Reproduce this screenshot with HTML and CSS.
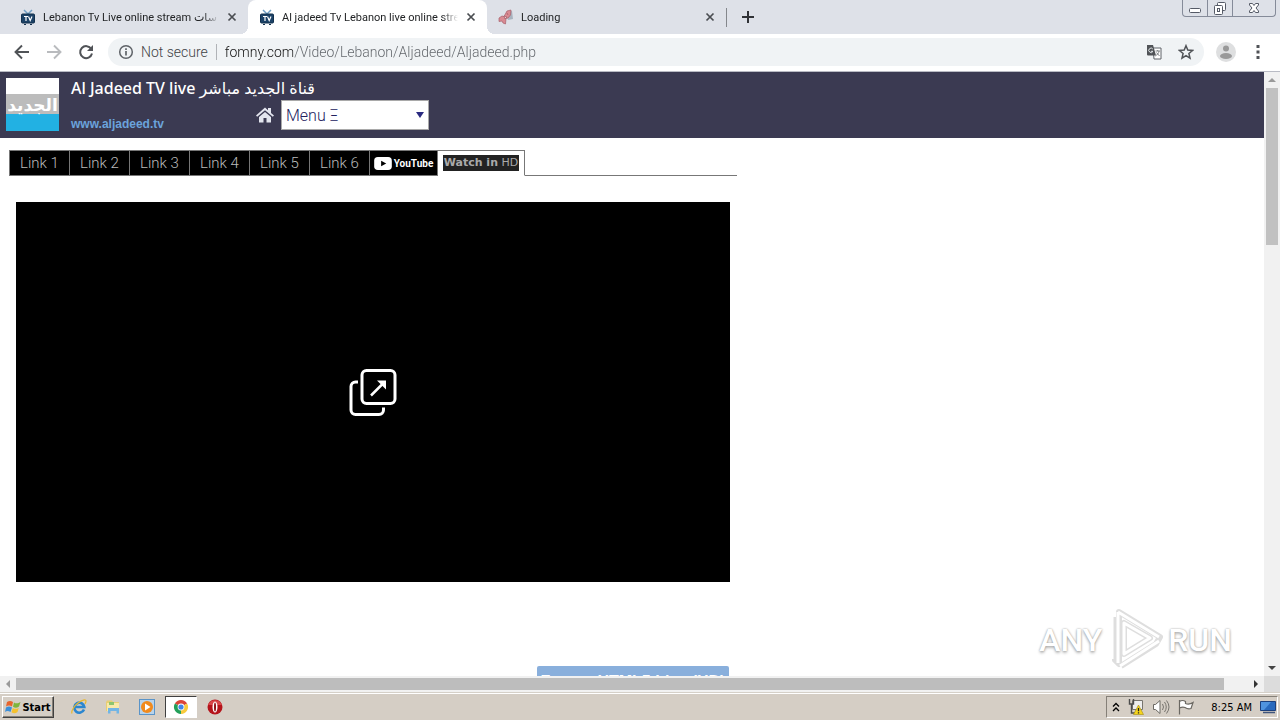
FILE: index.html
```html
<!DOCTYPE html>
<html lang="en">
<head>
<meta charset="utf-8">
<title>Al jadeed Tv Lebanon live online stream</title>
<link rel="stylesheet" href="styles.css">
</head>
<body>
<svg class="defs" width="0" height="0">
  <symbol id="tv" viewBox="0 0 16 16">
    <path d="M4 1l4 4 4-4" fill="none" stroke="#6f9fc4" stroke-width="1.5"/>
    <rect x="1.5" y="5" width="13" height="9" rx="1" fill="#1c4267" stroke="#12304d"/>
    <path d="M4 7.5h4M6 7.5v4.500M8.500 7.500l1.700 4 1.800-4" fill="none" stroke="#fff" stroke-width="1.200"/>
    <path d="M4 15.500h2M10 15.500h2" stroke="#12304d"/>
  </symbol>
  <symbol id="close" viewBox="0 0 10 10">
    <path d="M1.500 1.500l7 7M8.500 1.500l-7 7" stroke="#4a4d51" stroke-width="1.700"/>
  </symbol>
</svg>

<div class="tab-strip">
  <div class="tab">
    <svg class="favicon"><use href="#tv"/></svg>
    <span class="tab-title">Lebanon Tv Live online stream سات</span>
    <button class="tab-close" aria-label="Close tab"><svg><use href="#close"/></svg></button>
  </div>
  <div class="tab active">
    <svg class="favicon"><use href="#tv"/></svg>
    <span class="tab-title">Al jadeed Tv Lebanon live online stream</span>
    <button class="tab-close" aria-label="Close tab"><svg><use href="#close"/></svg></button>
  </div>
  <div class="tab last">
    <svg class="favicon" viewBox="0 0 16 16">
      <path d="M8 3l6-1 1 8-5 1z" fill="#a9b3bf"/>
      <path d="M1 9l3-2 2 .5L9 2l4-1-.5 5-2.500 3L8 9.500 7.500 15 5 14l-1-2-3 .5z" fill="#d98a92" stroke="#a8606b" stroke-width=".7"/>
      <path d="M6 7l3 1-2 2zM9 4l1 2" fill="#f3c9cc" stroke="#8a4450" stroke-width=".5"/>
    </svg>
    <span class="tab-title">Loading</span>
    <button class="tab-close" aria-label="Close tab"><svg><use href="#close"/></svg></button>
  </div>
  <button class="new-tab" aria-label="New tab"><svg viewBox="0 0 12 12"><path d="M6 0v12M0 6h12" stroke="#303236" stroke-width="2"/></svg></button>
  <div class="window-buttons">
    <button aria-label="Minimize"><svg viewBox="0 0 24 16"><rect x="6.500" y="8.500" width="11" height="4" rx="1" fill="#fff" stroke="#555a66"/></svg></button>
    <button aria-label="Restore"><svg viewBox="0 0 24 16"><rect x="9.500" y="2.500" width="8" height="8" rx="1" fill="#fff" stroke="#555a66"/><rect x="6.500" y="5.500" width="8" height="9" rx="1" fill="#fff" stroke="#555a66"/><rect x="9.500" y="8.500" width="2" height="3" fill="none" stroke="#555a66"/></svg></button>
    <button class="wide" aria-label="Close"><svg viewBox="0 0 24 16"><path d="M7.500 3.500h3l1.500 2 1.500-2h3v1.500l-2.500 3 2.500 3v1.500h-3l-1.500-2-1.500 2h-3v-1.500l2.500-3-2.500-3z" fill="#fff" stroke="#555a66"/></svg></button>
  </div>
</div>

<div class="toolbar">
  <button class="nav" aria-label="Back"><svg viewBox="0 0 16 16"><path d="M15 8H2M8 1.500L1.500 8 8 14.500" fill="none" stroke="#505357" stroke-width="1.900"/></svg></button>
  <button class="nav" aria-label="Forward"><svg viewBox="0 0 16 16"><path d="M1 8h13M8 1.500L14.500 8 8 14.500" fill="none" stroke="#b9bbbe" stroke-width="1.900"/></svg></button>
  <button class="nav" aria-label="Reload"><svg viewBox="0 0 16 16"><path d="M13.300 5A6 6 0 1 0 14 9.500" fill="none" stroke="#505357" stroke-width="2"/><path d="M15 1v6H9z" fill="#505357"/></svg></button>
  <div class="omnibox">
    <svg class="info" viewBox="0 0 16 16"><circle cx="8" cy="8" r="6.300" fill="none" stroke="#5f6368" stroke-width="1.500"/><path d="M8 7v4.500M8 4.300v1.600" stroke="#5f6368" stroke-width="1.700"/></svg>
    <label class="secure" for="url">Not secure</label>
    <input class="url" id="url" type="text" value="fomny.com/Video/Lebanon/Aljadeed/Aljadeed.php">
    <button aria-label="Translate"><svg viewBox="0 0 16 16"><path d="M7 4h8v11H8z" fill="#fff" stroke="#5f6368"/><path d="M1 1h6l3 10.500H2a1 1 0 0 1-1-1z" fill="#505357"/><path d="M6.800 5A2.200 2.200 0 1 0 7 7.300H5" fill="none" stroke="#e4e8eb"/><path d="M9.500 7h4.500M11.700 6v1M13 7c0 2-2 4-3.500 5M10.500 8.500l3 3.500" fill="none" stroke="#777a7e" stroke-width=".9"/></svg></button>
    <button aria-label="Bookmark"><svg viewBox="0 0 16 16"><path d="M8 1.700l1.800 4.400 4.700.4-3.600 3 1.100 4.700L8 11.700l-4 2.500 1.100-4.700-3.600-3 4.700-.4z" fill="none" stroke="#505357" stroke-width="1.500"/></svg></button>
  </div>
  <button class="avatar" aria-label="Profile"><svg viewBox="0 0 20 20"><circle cx="10" cy="10" r="10" fill="#dedfe0"/><circle cx="10" cy="6.500" r="3" fill="#999"/><ellipse cx="10" cy="14" rx="6" ry="3" fill="#999"/></svg></button>
  <button class="more" aria-label="Menu"><svg viewBox="0 0 4 16"><path d="M.5 1h3v3h-3zM.5 6.500h3v3h-3zM.5 12h3v3h-3z" fill="#505357"/></svg></button>
</div>

<div class="viewport">
  <main class="page">
    <header class="site-header">
      <div class="logo"><span>الجديد</span></div>
      <div class="site-info">
        <h1>Al Jadeed TV live قناة الجديد مباشر</h1>
        <div class="site-row">
          <a class="site-link" href="#">www.aljadeed.tv</a>
          <a class="home" href="#" aria-label="Home"><svg viewBox="0 0 18 16"><path d="M0 8.500L9 .5l3 2.700V1h3v5l3 2.500-1.200 1.300L9 3.200 1.200 9.800z" fill="#e3e5ee"/><path d="M3 10l6-5 6 5v5.500h-4.500V11h-3v4.500H3z" fill="#e3e5ee"/></svg></a>
          <div class="menu-box">
            <select class="menu" aria-label="Menu"><option>Menu Ξ</option></select>
          </div>
        </div>
      </div>
    </header>

    <div class="player-column">
      <nav class="links">
        <a href="#">Link 1</a>
        <a href="#">Link 2</a>
        <a href="#">Link 3</a>
        <a href="#">Link 4</a>
        <a href="#">Link 5</a>
        <a href="#">Link 6</a>
        <a class="youtube" href="#"><svg viewBox="0 0 19 14"><rect width="19" height="14" rx="4" fill="#fff"/><path d="M7.500 4l5.500 3-5.500 3z" fill="#000"/></svg><span>YouTube</span></a>
        <a class="current" href="#"><span><b>Watch in</b> HD</span></a>
      </nav>
      <div class="video">
        <button aria-label="Open player"><svg viewBox="0 0 48 48"><rect x="13" y="2.500" width="33" height="33" rx="4.500" fill="none" stroke="#fff" stroke-width="3"/><path d="M9 14H6.500a4.500 4.500 0 0 0-4.500 4.500V42a4.500 4.500 0 0 0 4.500 4.500H30a4.500 4.500 0 0 0 4.500-4.500v-2.500" fill="none" stroke="#fff" stroke-width="3"/><path d="M22 27.500L34 15.500" stroke="#fff" stroke-width="2.500"/><path d="M28 12.500h9v9z" fill="#fff"/></svg></button>
      </div>
      <a class="upgrade" href="#">Fomny HTML5 Live (HD)</a>
    </div>

    <div class="watermark">
      <span>ANY</span>
      <svg viewBox="0 0 58 64"><g fill="none" stroke-linejoin="round"><path d="M9 9v43l4 4V4l41 25-4 7-35 22" stroke="#dedede" stroke-width="6"/><path d="M18 15v31l26-16z" stroke="#dedede" stroke-width="6"/><path d="M6 8v43M12 4v51M12 4l41 25M14 58l39-25" stroke="#fff" stroke-width="3"/><path d="M18 15v31l26-16z" stroke="#fff" stroke-width="3"/></g></svg>
      <span>RUN</span>
    </div>
  </main>
  <div class="scroll-y">
    <svg viewBox="0 0 16 16"><path d="M4 10l4-4 4 4z" fill="#9a9a9a"/></svg>
    <div class="thumb"></div>
    <svg class="end" viewBox="0 0 16 16"><path d="M4 6l4 4 4-4z" fill="#444"/></svg>
  </div>
  <div class="scroll-x">
    <svg viewBox="0 0 16 16"><path d="M10 4L6 8l4 4z" fill="#9a9a9a"/></svg>
    <div class="thumb"></div>
    <svg viewBox="0 0 16 16"><path d="M6 4l4 4-4 4z" fill="#333"/></svg>
  </div>
  <div class="corner"></div>
</div>

<div class="taskbar">
  <button class="start">
    <svg viewBox="0 0 16 16"><path d="M2 3c2-1.500 4-1.500 6 0L7 7.500c-2-1.300-4-1.300-6 0z" fill="#e8642c"/><path d="M9 3.500c2 1.200 4 1.200 6.500-.5L14 7.500c-2 1.500-4 1.500-6 .3z" fill="#7eb53c"/><path d="M1 8.500c2-1.400 4-1.400 6 0L5.500 13c-2-1.300-4-1.300-5.500 0z" fill="#3b8fd9"/><path d="M7.800 9c2 1.200 4 1.200 6-.3L12.500 13c-2 1.500-4 1.500-6 .3z" fill="#f5c12e"/></svg>
    Start
  </button>
  <div class="quick">
    <button aria-label="Internet Explorer"><svg viewBox="0 0 16 16"><path d="M13 10.500A5 5 0 1 1 13.300 8H4.500" fill="none" stroke="#2b86cf" stroke-width="2.600"/><path d="M1 14.500C0 12 3 7 7 4s8-4 8-2c0 1-.5 2-1 3" fill="none" stroke="#e8b72c" stroke-width="1.200"/></svg></button>
    <button aria-label="Explorer"><svg viewBox="0 0 16 16"><path d="M1 3l1-1.500h5L8 3h6v9H1z" fill="#e8ce74"/><path d="M2 4h12v8H2z" fill="#f8e9a9"/><path d="M4 3h5v3H4z" fill="#8cc56f"/><path d="M3 14.500V9h11v5.500h-2.500V12h-6v2.500z" fill="#72b5e5"/></svg></button>
    <button aria-label="Media Player"><svg viewBox="0 0 16 16"><rect x=".5" y=".5" width="15" height="15" fill="#b8d3ea" stroke="#5a94c8"/><circle cx="8" cy="8" r="6" fill="#f18a1c"/><path d="M6 4.500L11.500 8 6 11.500z" fill="#fff"/></svg></button>
    <button class="pressed" aria-label="Chrome"><svg viewBox="0 0 16 16"><path d="M8 8L1.900 4.500A7 7 0 0 1 14.100 4.500z" fill="#dc4437"/><path d="M8 8l6.100-3.500A7 7 0 0 1 8 15z" fill="#f8ca3c"/><path d="M8 8v7A7 7 0 0 1 1.900 4.500z" fill="#23a05a"/><circle cx="8" cy="8" r="3.400" fill="#fff"/><circle cx="8" cy="8" r="2.600" fill="#4285e8"/></svg></button>
    <button aria-label="Opera"><svg viewBox="0 0 16 16"><circle cx="8" cy="8" r="7.500" fill="#b5141b"/><path d="M1 6a7.500 7.500 0 0 1 14 0z" fill="#d9474a"/><ellipse cx="8" cy="8" rx="2.500" ry="5.500" fill="#fff"/><ellipse cx="8" cy="8" rx="1" ry="4.600" fill="#8e1116"/></svg></button>
  </div>
  <div class="tray">
    <svg class="chevrons" viewBox="0 0 8 10"><path d="M1 4.500l3-3 3 3M1 9l3-3 3 3" fill="none" stroke="#000" stroke-width="1.300"/></svg>
    <svg viewBox="0 0 16 16"><path d="M4.500 1.500h10v9h-10z" fill="#eee" stroke="#77746e"/><path d="M1.500 0v5h4V0M3.500 5v9h4" fill="none" stroke="#4c4c4c" stroke-width="1.400"/><path d="M10.500 6l5 9.500h-10z" fill="#f6d51c" stroke="#a58c10" stroke-width=".6"/><path d="M10.500 9v3.300M10.500 13.300v1.200" stroke="#222" stroke-width="1.300"/></svg>
    <svg class="sound" viewBox="0 0 18 16"><path d="M1.500 5.500h2L8 1.500v13l-4.500-4h-2z" fill="#fff" stroke="#6b6862"/><path d="M10.500 5q2 3 0 6M12.500 3q3.500 5 0 10M14.500 1.500q5 6.500 0 13" fill="none" stroke="#77746e"/></svg>
    <svg viewBox="0 0 16 16"><path d="M1.500 1v14.500M1.500 2.500q3-2 6 0v2q3.500 1.500 7.500-1l-2 6q-3 1-6-1-2.500-1-5.500.5" fill="#fff" stroke="#6b6862" stroke-width="1.200"/></svg>
    <time>8:25 AM</time>
    <svg class="desktop" viewBox="0 0 16 16"><path d="M.5 2.500h15v9H.5z" fill="#2869bd" stroke="#1b3f7c"/><path d="M1 3h10L4 11H1z" fill="#4f93de"/><path d="M3 13.500h12" stroke="#40557c" stroke-width="1.500"/></svg>
  </div>
</div>
</body>
</html>
```
FILE: styles.css
```css
* {
  box-sizing: border-box;
}
body {
  margin: 0;
  height: 100vh;
  display: flex;
  flex-direction: column;
  overflow: hidden;
  background: #fff;
  font-family: Roboto, "DejaVu Sans", sans-serif;
  font-size: 11px;
}
button {
  display: flex;
  align-items: center;
  justify-content: center;
  padding: 0;
  border: 0;
  background: none;
  font: inherit;
}
svg {
  flex: none;
  width: 16px;
  height: 16px;
}
.defs {
  position: absolute;
  width: 0;
  height: 0;
}

/* tabs */
.tab-strip {
  display: flex;
  flex: none;
  height: 34px;
  padding-left: 9px;
  background: #dee1e8;
}
.tab {
  position: relative;
  display: flex;
  align-items: center;
  width: 239px;
  padding: 0 10px 0 11px;
  color: #222426;
}
.tab.active {
  background: #fff;
  border-radius: 8px 8px 0 0;
}
.tab.active::before,
.tab.active::after {
  content: "";
  position: absolute;
  bottom: 0;
  width: 8px;
  height: 8px;
}
.tab.active::before {
  right: 100%;
  background: radial-gradient(circle at 0 0, transparent 8px, #fff 8px);
}
.tab.active::after {
  left: 100%;
  background: radial-gradient(circle at 100% 0, transparent 8px, #fff 8px);
}
.tab-title {
  flex: 1;
  margin: 0 7px;
  overflow: hidden;
  white-space: nowrap;
  mask-image: linear-gradient(to left, transparent, #000 16px);
}
.favicon {
  width: 16px;
  height: 16px;
}
.tab-close svg {
  width: 10px;
  height: 10px;
}
.tab-close {
  width: 12px;
  height: 16px;
}
.new-tab {
  width: 44px;
  position: relative;
}
.new-tab::before {
  content: "";
  position: absolute;
  left: 0;
  top: 8px;
  height: 19px;
  border-left: 1px solid #84878c;
}
.new-tab svg {
  width: 12px;
  height: 12px;
}
.window-buttons {
  display: flex;
  height: 17px;
  margin: 0 4px 0 auto;
  border: 1px solid #858b99;
  border-top: 0;
  border-radius: 0 0 4px 4px;
}
.window-buttons button {
  width: 25px;
  border-right: 1px solid #858b99;
}
.window-buttons .wide {
  width: 42px;
  border: 0;
}
.window-buttons svg {
  width: 24px;
}

/* address bar */
.toolbar {
  display: flex;
  flex: none;
  align-items: center;
  height: 38px;
  padding: 0 14px 2px 6px;
  border-bottom: 1px solid #b9bbc4;
}
.nav {
  width: 32px;
  height: 28px;
}
.omnibox {
  display: flex;
  flex: 1;
  align-items: center;
  height: 28px;
  margin: 0 12px 0 6px;
  padding: 0 10px;
  border-radius: 14px;
  background: #f0f3f5;
  font-size: 14px;
  font-weight: 300;
}
.omnibox button {
  width: 16px;
  margin-left: 16px;
}
.secure {
  margin-left: 7px;
  padding-right: 8px;
  border-right: 1px solid #b0b3b7;
  line-height: 16px;
  color: #3f4246;
}
.url {
  flex: 1;
  padding: 0 0 0 8px;
  border: 0;
  font: inherit;
  color: transparent;
  background: linear-gradient(to right, #111 76px, #5f6368 76px);
  background-clip: text;
}
.avatar svg {
  width: 20px;
  height: 20px;
}
.more {
  width: 4px;
  margin: 0 6px 0 20px;
}
.more svg {
  width: 4px;
}

/* page */
.viewport {
  display: grid;
  flex: 1;
  min-height: 0;
  grid-template-columns: 1fr 16px;
  grid-template-rows: 1fr 16px;
}
.page {
  position: relative;
  min-height: 0;
  overflow: hidden;
}
.site-header {
  display: flex;
  height: 66px;
  padding: 6px;
  gap: 12px;
  background: #3b3a52;
}
.logo {
  display: flex;
  align-items: center;
  justify-content: center;
  width: 53px;
  height: 53px;
  background: linear-gradient(#fff 16px, #bcbcbc 16px 36px, #22b1e3 36px);
  font: bold 17px/24px "DejaVu Sans", sans-serif;
  color: #fff;
}
h1 {
  margin: 0;
  font: 500 16px/20px "Noto Sans", "DejaVu Sans", sans-serif;
  color: #fff;
}
.site-row {
  display: flex;
  align-items: center;
}
.site-link {
  width: 185px;
  padding-top: 18px;
  font: bold 12px/16px "Liberation Sans", sans-serif;
  color: #6ba3dc;
  text-decoration: none;
}
.home,
.home svg {
  display: block;
  width: 18px;
}
.menu-box {
  position: relative;
  margin-left: 7px;
}
.menu-box::after {
  content: "";
  position: absolute;
  right: 5px;
  top: 12px;
  border: 4px solid transparent;
  border-top: 6px solid #2a2a80;
  border-bottom: 0;
  pointer-events: none;
}
.menu {
  appearance: none;
  display: block;
  width: 148px;
  height: 30px;
  padding: 0 4px;
  border: 1px solid #a9a9a9;
  border-radius: 0;
  background: #fff;
  font: 300 16px Roboto, sans-serif;
  color: #22225e;
}
.player-column {
  width: 728px;
  margin: 12px 0 0 9px;
}
.links {
  display: flex;
  height: 26px;
  border-bottom: 1px solid #777;
}
.links a {
  display: flex;
  align-items: center;
  justify-content: center;
  width: 60px;
  height: 26px;
  border: 1px solid #777;
  border-left-width: 0;
  background: #000;
  font: 300 15px Roboto, sans-serif;
  color: #bbb;
  text-decoration: none;
}
.links a:first-child {
  width: 61px;
  border-left-width: 1px;
}
.links .youtube {
  width: 68px;
  gap: 2px;
  font: bold 10px Roboto, sans-serif;
  color: #fff;
}
.youtube svg {
  width: 18px;
  height: 13px;
}
.links .current {
  width: 87px;
  border-bottom-color: #fff;
  background: #fff;
  font: 11px "DejaVu Sans", sans-serif;
}
.current span {
  padding: 0 1px;
  background: #222;
  line-height: 16px;
  white-space: nowrap;
  color: #aaa;
}
.video {
  display: flex;
  align-items: center;
  justify-content: center;
  height: 380px;
  margin: 26px 7px 0;
  background: #000;
}
.video svg {
  width: 48px;
  height: 48px;
}
.upgrade {
  display: block;
  width: 192px;
  margin: 84px 8px 0 auto;
  padding-top: 4px;
  border-radius: 2px;
  background: #89afdc;
  font: bold 16px/24px "Liberation Sans", sans-serif;
  text-align: center;
  text-decoration: none;
  white-space: nowrap;
  color: #fff;
}
.watermark {
  position: absolute;
  right: 32px;
  bottom: 4px;
  display: flex;
  align-items: center;
  gap: 4px;
  font: 500 32px/64px Roboto, sans-serif;
  color: #fff;
  text-shadow: 0 0 2px #999, 0 2px 3px #bbb;
}
.watermark svg {
  width: 58px;
  height: 64px;
}

/* scrollbars */
.scroll-y,
.scroll-x {
  display: flex;
  background: #f1f1f1;
}
.scroll-y {
  flex-direction: column;
}
.scroll-y .thumb {
  height: 26%;
  margin: 0 2px;
  background: #c1c1c1;
}
.scroll-y .end {
  margin-top: auto;
}
.scroll-x .thumb {
  flex: 1;
  margin: 2px 24px 2px 0;
  background: #bdbdbd;
}
.corner {
  background: #dcdcdc;
}

/* taskbar */
.taskbar {
  display: flex;
  flex: none;
  align-items: center;
  height: 28px;
  padding: 1px 2px 0;
  border-top: 1px solid #d5d0c8;
  box-shadow: inset 0 1px #fff;
  background: #d5cec5;
  font-family: "DejaVu Sans Condensed", "DejaVu Sans", sans-serif;
}
.start {
  width: 52px;
  height: 22px;
  gap: 1px;
  border: 1px solid;
  border-color: #fff #404040 #404040 #fff;
  box-shadow: inset -1px -1px #858078;
  font-size: 11px;
  font-weight: bold;
}
.quick {
  display: flex;
  gap: 2px;
  margin-left: 9px;
}
.quick button {
  width: 32px;
  height: 22px;
}
.quick .pressed {
  border: 1px solid;
  border-color: #404040 #fff #fff #404040;
  background: #fff;
}
.tray {
  display: flex;
  align-items: center;
  gap: 8px;
  width: 172px;
  height: 22px;
  margin-left: auto;
  padding: 0 1px 0 5px;
  border: 1px solid;
  border-color: #858078 #fff #fff #858078;
  font-size: 11px;
}
.tray .chevrons {
  width: 8px;
  height: 10px;
}
.tray .sound {
  width: 18px;
}
.tray time {
  margin-left: auto;
  white-space: nowrap;
}
```
